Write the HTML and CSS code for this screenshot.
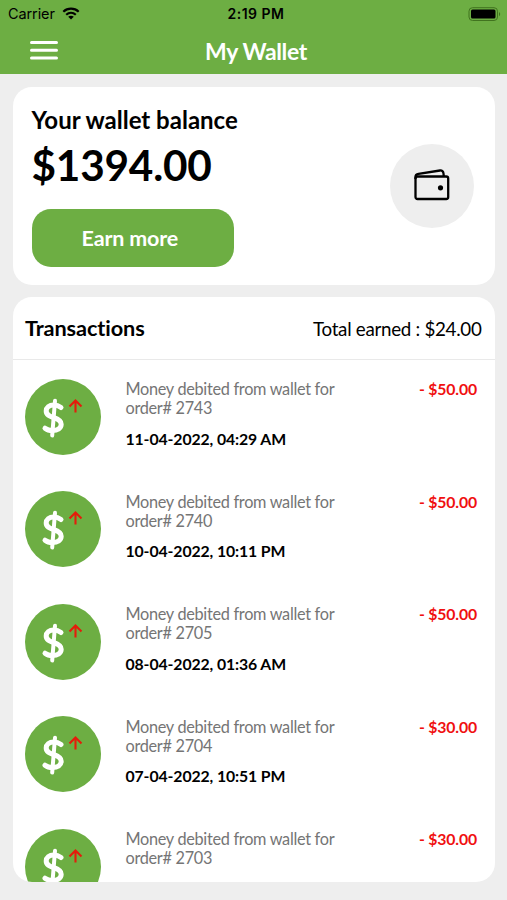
FILE: index.html
```html
<!DOCTYPE html>
<html lang="en">
<head>
  <meta charset="UTF-8">
  <meta name="viewport" content="width=device-width, initial-scale=1.0">
  <title>My Wallet</title>
  <link rel="stylesheet" href="styles.css">
</head>
<body>
  <!-- Shared transaction icon -->
  <svg class="icon-defs" width="0" height="0">
    <symbol id="debit" viewBox="0 0 76 76">
      <g fill="none" stroke="#fff" stroke-width="5" stroke-linecap="round" stroke-linejoin="round">
        <path d="M36 28.500C33.500 26.600 31.500 26 28.800 26C24.200 26 21.200 28.500 21.200 32C21.200 36 24.500 37.200 28.500 38.500C33 40 36.200 41.500 36.200 45.300C36.200 49.200 32.500 51.500 27.500 51.500C24.500 51.500 22 50.800 20 49.200"/>
        <path d="M30 21.800L27.200 56.500" stroke-width="4"/>
      </g>
      <path d="M50.500 33.500V21.500M44.500 27.500L50.500 21.500L56.500 27.500" fill="none" stroke="#e51c0b" stroke-width="2.100"/>
    </symbol>
  </svg>

  <!-- Header -->
  <header class="header">
    <div class="status-bar">
      <div class="carrier">
        Carrier
        <svg width="18" height="13" viewBox="0 0 18 13" fill="none" stroke="#000" stroke-width="2.200"><path d="M1.300 4.700C5.700.700 12.300.700 16.700 4.700M4.200 7.800C7 5.300 11 5.300 13.800 7.800"/><path d="M9 12.400L6.200 9.700C7.800 8.300 10.200 8.300 11.800 9.700Z" fill="#000" stroke="none"/></svg>
      </div>
      <div class="time">2:19 PM</div>
      <svg class="battery" width="33" height="14" viewBox="0 0 33 14"><rect x="1" y=".7" width="28.500" height="12.800" rx="3.500" fill="none" stroke="#41731f" stroke-width="1"/><rect x="3" y="2.600" width="24.500" height="9" rx="1.500"/><path d="M31 5V9.200C32.600 8.300 32.600 5.900 31 5Z" fill="#41731f"/></svg>
    </div>
    <div class="nav-bar">
      <button class="menu-button" aria-label="Menu">
        <svg width="28" height="20" viewBox="0 0 28 20" stroke="#fff" stroke-width="3" stroke-linecap="round"><path d="M1.500 1.500H26.500M1.500 9.200H26.500M1.500 17H26.500"/></svg>
      </button>
      <h1 class="title">My Wallet</h1>
    </div>
  </header>

  <main class="content">
    <!-- Balance -->
    <section class="card balance-card">
      <div>
        <div class="balance-label">Your wallet balance</div>
        <div class="balance-amount">$1394.00</div>
        <button class="earn-button">Earn more</button>
      </div>
      <div class="wallet-icon">
        <svg width="36" height="34" viewBox="0 0 36 34" fill="none" stroke="#000" stroke-width="2.300" stroke-linejoin="round"><rect x="1.500" y="7.500" width="32.700" height="22.500" rx="2"/><path d="M1.500 10V8C1.500 6 2.500 5.200 4.500 4.900L26 1.500C28 1.200 29.300 2.500 29.500 4.500L29.800 7.500"/><circle cx="26.500" cy="18.800" r="2.600" fill="#000" stroke="none"/></svg>
      </div>
    </section>

    <!-- Transactions -->
    <section class="card transactions-card">
      <div class="transactions-header">
        <h2 class="transactions-title">Transactions</h2>
        <div class="total">Total earned : $24.00</div>
      </div>
      <div class="transaction-list">
        <div class="transaction">
          <svg class="debit-icon"><use href="#debit"/></svg>
          <div class="details">
            <div class="description">Money debited from wallet for order# 2743</div>
            <div class="date">11-04-2022, 04:29 AM</div>
          </div>
          <div class="amount">- $50.00</div>
        </div>
        <div class="transaction">
          <svg class="debit-icon"><use href="#debit"/></svg>
          <div class="details">
            <div class="description">Money debited from wallet for order# 2740</div>
            <div class="date">10-04-2022, 10:11 PM</div>
          </div>
          <div class="amount">- $50.00</div>
        </div>
        <div class="transaction">
          <svg class="debit-icon"><use href="#debit"/></svg>
          <div class="details">
            <div class="description">Money debited from wallet for order# 2705</div>
            <div class="date">08-04-2022, 01:36 AM</div>
          </div>
          <div class="amount">- $50.00</div>
        </div>
        <div class="transaction">
          <svg class="debit-icon"><use href="#debit"/></svg>
          <div class="details">
            <div class="description">Money debited from wallet for order# 2704</div>
            <div class="date">07-04-2022, 10:51 PM</div>
          </div>
          <div class="amount">- $30.00</div>
        </div>
        <div class="transaction">
          <svg class="debit-icon"><use href="#debit"/></svg>
          <div class="details">
            <div class="description">Money debited from wallet for order# 2703</div>
          </div>
          <div class="amount">- $30.00</div>
        </div>
      </div>
    </section>
  </main>
</body>
</html>
```
FILE: styles.css
```css
* {
  margin: 0;
  padding: 0;
  box-sizing: border-box;
}

body {
  background-color: #eeeeee;
  color: #000;
  font-family: Lato, sans-serif;
  font-variant-ligatures: none;
  height: 100vh;
  display: flex;
  flex-direction: column;
  overflow: hidden;
}

button {
  border: none;
  font-family: inherit;
  cursor: pointer;
}

.icon-defs {
  display: none;
}

.header {
  height: 74px;
  flex-shrink: 0;
  background-color: #6dae43;
}

.status-bar {
  height: 27px;
  padding: 0 6px 0 8px;
  display: grid;
  grid-template-columns: 1fr auto 1fr;
  align-items: center;
  font-family: Inter, sans-serif;
  font-size: 14.5px;
  letter-spacing: -0.1px;
}

.carrier {
  display: flex;
  align-items: center;
  gap: 7px;
}

.time {
  font-weight: 600;
  font-size: 14px;
  letter-spacing: 0.5px;
  padding-left: 3px;
}

.battery {
  justify-self: end;
}

.nav-bar {
  height: 47px;
  padding: 1px 27px 0 29px;
  display: grid;
  grid-template-columns: 1fr auto 1fr;
  align-items: center;
}

.menu-button {
  width: 29px;
  height: 20px;
  background: none;
}

.title {
  color: #fff;
  font-size: 23px;
  font-weight: 700;
  letter-spacing: -0.35px;
  padding-left: 3px;
}

.content {
  flex: 1;
  min-height: 0;
  padding: 12.5px 12px 18px 13px;
  display: flex;
  flex-direction: column;
  gap: 12px;
}

.card {
  background-color: #fff;
  border-radius: 19px;
}

.balance-card {
  height: 198.5px;
  flex-shrink: 0;
  padding: 18px 21px 18px 18.5px;
  display: flex;
  align-items: center;
  justify-content: space-between;
}

.balance-label {
  font-size: 24px;
  font-weight: 700;
  line-height: 30px;
}

.balance-amount {
  font-size: 42.3px;
  font-weight: 700;
  line-height: 60px;
  letter-spacing: -0.2px;
  margin-bottom: 14px;
}

.earn-button {
  width: 202.5px;
  height: 58px;
  border-radius: 19px;
  background-color: #6dae43;
  color: #fff;
  font-size: 21.5px;
  font-weight: 700;
  letter-spacing: -0.2px;
  padding: 0 6px 0 0;
}

.wallet-icon {
  width: 84px;
  height: 84px;
  border-radius: 50%;
  background-color: #eeeeee;
  display: flex;
  align-items: center;
  justify-content: center;
}

.transactions-card {
  flex: 1;
  min-height: 0;
  overflow: hidden;
}

.transactions-header {
  height: 63px;
  padding: 0 13.5px 0 12px;
  border-bottom: 1.5px solid #e9e9e9;
  display: flex;
  align-items: center;
  justify-content: space-between;
}

.transactions-title {
  font-size: 21.7px;
  font-weight: 700;
  letter-spacing: -0.1px;
}

.total {
  font-size: 18.8px;
  letter-spacing: -0.3px;
}

.transaction-list {
  padding: 18.5px 18px 0 12px;
}

.transaction {
  height: 112.5px;
  display: flex;
  align-items: flex-start;
}

.debit-icon {
  width: 76px;
  height: 76px;
  border-radius: 50%;
  background-color: #6dae43;
  flex-shrink: 0;
}

.details {
  width: 230px;
  margin-left: 24.5px;
  padding-top: 0.5px;
}

.description {
  color: #757575;
  font-size: 16.3px;
  line-height: 19px;
  letter-spacing: -0.3px;
}

.date {
  margin-top: 11.5px;
  font-size: 15.8px;
  font-weight: 700;
  line-height: 19px;
  letter-spacing: -0.1px;
}

.amount {
  margin-left: auto;
  padding-top: 0.5px;
  color: #f01010;
  font-size: 15.8px;
  font-weight: 700;
  line-height: 19px;
  letter-spacing: -0.15px;
}
```
